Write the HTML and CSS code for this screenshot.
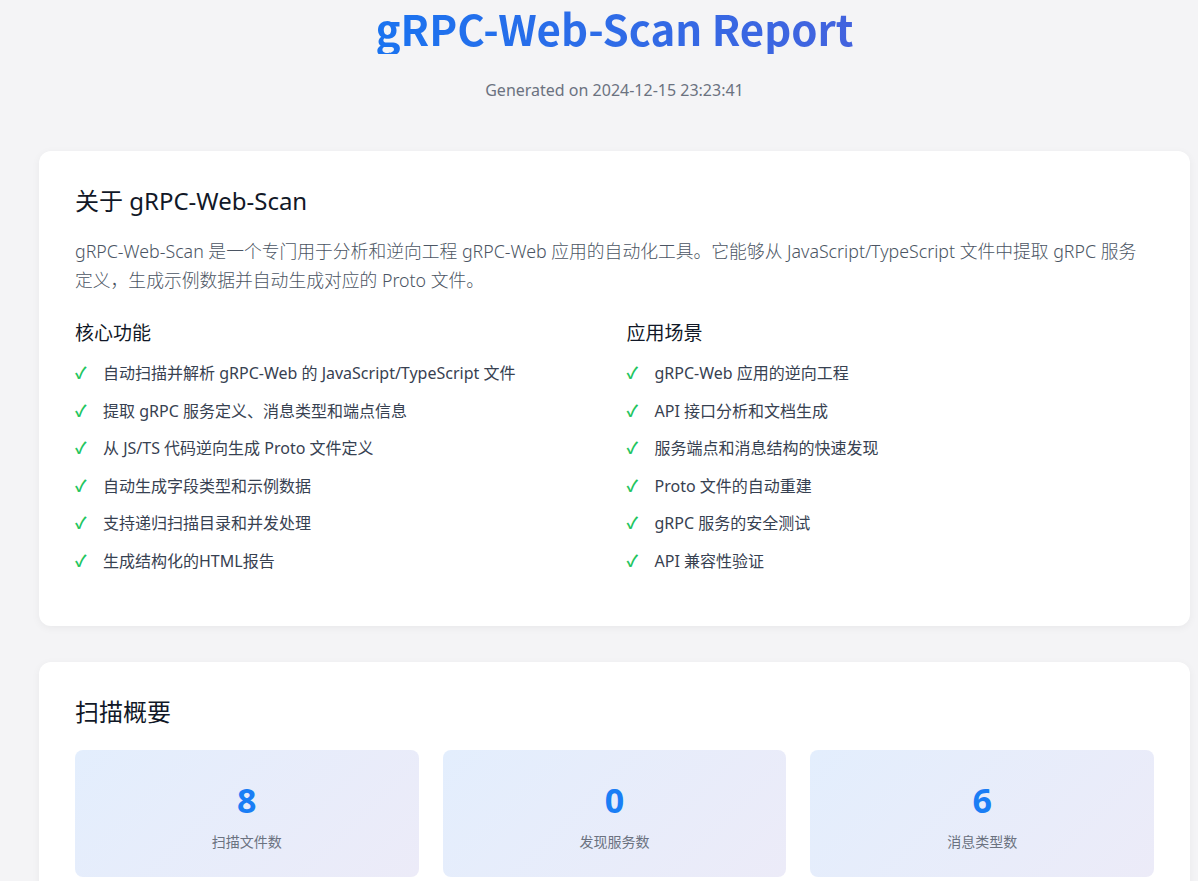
FILE: index.html
```html
<!DOCTYPE html>
<html lang="zh-CN">
<head>
<meta charset="utf-8">
<title>gRPC-Web-Scan Report</title>
<link rel="stylesheet" href="styles.css">
</head>
<body>
<div class="container">
  <header class="header">
    <h1 class="title">gRPC-Web-Scan Report</h1>
    <p class="generated">Generated on 2024-12-15 23:23:41</p>
  </header>

  <section class="card">
    <h2 class="card-title">关于 gRPC-Web-Scan</h2>
    <p class="intro">gRPC-Web-Scan 是一个专门用于分析和逆向工程 gRPC-Web 应用的自动化工具。它能够从 JavaScript/TypeScript 文件中提取 gRPC 服务定义，生成示例数据并自动生成对应的 Proto 文件。</p>
    <div class="features">
      <div class="feature-col">
        <h3 class="sub-title">核心功能</h3>
        <ul class="check-list">
          <li><span class="check">✓</span>自动扫描并解析 gRPC-Web 的 JavaScript/TypeScript 文件</li>
          <li><span class="check">✓</span>提取 gRPC 服务定义、消息类型和端点信息</li>
          <li><span class="check">✓</span>从 JS/TS 代码逆向生成 Proto 文件定义</li>
          <li><span class="check">✓</span>自动生成字段类型和示例数据</li>
          <li><span class="check">✓</span>支持递归扫描目录和并发处理</li>
          <li><span class="check">✓</span>生成结构化的HTML报告</li>
        </ul>
      </div>
      <div class="feature-col">
        <h3 class="sub-title">应用场景</h3>
        <ul class="check-list">
          <li><span class="check">✓</span>gRPC-Web 应用的逆向工程</li>
          <li><span class="check">✓</span>API 接口分析和文档生成</li>
          <li><span class="check">✓</span>服务端点和消息结构的快速发现</li>
          <li><span class="check">✓</span>Proto 文件的自动重建</li>
          <li><span class="check">✓</span>gRPC 服务的安全测试</li>
          <li><span class="check">✓</span>API 兼容性验证</li>
        </ul>
      </div>
    </div>
  </section>

  <section class="card">
    <h2 class="card-title">扫描概要</h2>
    <div class="stats">
      <div class="stat">
        <div class="stat-num">8</div>
        <div class="stat-label">扫描文件数</div>
      </div>
      <div class="stat">
        <div class="stat-num">0</div>
        <div class="stat-label">发现服务数</div>
      </div>
      <div class="stat">
        <div class="stat-num">6</div>
        <div class="stat-label">消息类型数</div>
      </div>
    </div>
  </section>
</div>
</body>
</html>
```

FILE: styles.css
```css
* { box-sizing: border-box; }

html, body {
  margin: 0;
  padding: 0;
}

body {
  background: #f4f4f6;
  font-family: "Noto Sans", "Noto Sans CJK SC", sans-serif;
  color: #1f2937;
}

.container {
  padding: 0 8px 40px 39px;
}

.header {
  text-align: center;
  padding-top: 2px;
  margin-bottom: 50px;
}

.title {
  margin: 0;
  font-family: "Noto Sans CJK SC", "Noto Sans", sans-serif;
  font-size: 42px;
  font-weight: 700;
  line-height: 52px;
  background: linear-gradient(90deg, #1a73f0, #4363de);
  -webkit-background-clip: text;
  background-clip: text;
  color: transparent;
  display: inline-block;
}

.generated {
  margin: 25px 0 0;
  font-size: 16px;
  color: #6b7280;
}

.card {
  background: #fff;
  border-radius: 12px;
  box-shadow: 0 2px 8px rgba(0, 0, 0, 0.05);
  padding: 30px 36px 45px;
  margin-bottom: 36px;
}

.card-title {
  margin: 0 0 16px;
  font-size: 24px;
  font-weight: 400;
  line-height: 40px;
  color: #111827;
}

.intro {
  margin: 0 0 23px;
  padding-right: 12px;
  font-size: 17.8px;
  line-height: 29px;
  font-weight: 300;
  color: #4b5563;
}

.features {
  display: grid;
  grid-template-columns: 1fr 1fr;
  gap: 24px;
}

.sub-title {
  margin: 0 0 7px;
  font-size: 19px;
  font-weight: 400;
  line-height: 30px;
  color: #111827;
}

.check-list {
  list-style: none;
  margin: 0;
  padding: 0;
}

.check-list li {
  display: flex;
  align-items: center;
  font-size: 16px;
  line-height: 23.6px;
  color: #374151;
  padding: 7px 0;
}

.check {
  color: #22c55e;
  font-weight: 700;
  width: 28px;
  flex: none;
}

.stats {
  display: grid;
  grid-template-columns: repeat(3, 1fr);
  gap: 24px;
  margin-top: 18px;
}

.stat {
  border-radius: 8px;
  background: linear-gradient(135deg, #e3eefd, #ecebf8);
  text-align: center;
  padding: 28px 16px 24px;
  height: 127px;
}

.stat-num {
  font-size: 34px;
  font-weight: 700;
  line-height: 44px;
  color: #1a7ef5;
}

.stat-label {
  margin-top: 9px;
  font-size: 14px;
  color: #6b7280;
}
```
